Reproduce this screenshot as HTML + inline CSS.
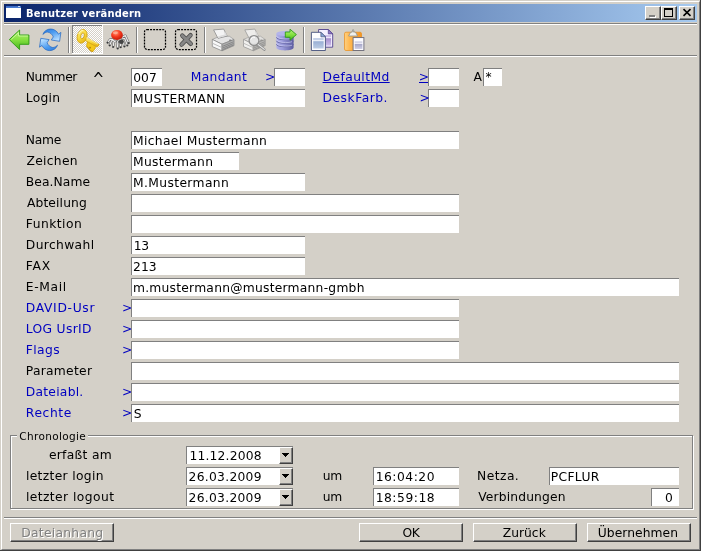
<!DOCTYPE html>
<html><head><meta charset="utf-8"><title>Benutzer verändern</title>
<style>
html,body{margin:0;padding:0;background:#d4d0c8;overflow:hidden}
body{width:701px;height:551px;position:relative;font-family:"DejaVu Sans","Liberation Sans",sans-serif;font-size:12.3px;color:#000}
#win{position:absolute;left:0;top:0;width:701px;height:551px;background:#d4d0c8;box-sizing:border-box;
 border-right:1px solid #404040;border-bottom:1px solid #404040;}
#win:before{content:"";position:absolute;left:1px;top:1px;right:0;bottom:0;border-left:1px solid #fff;border-top:1px solid #fff;border-right:1px solid #808080;border-bottom:1px solid #808080}
#title{position:absolute;left:4px;top:4px;width:693px;height:18px;background:linear-gradient(90deg,#0a246a 0%,#a6caf0 100%)}
#title .t{will-change:transform;position:absolute;left:22px;top:2px;color:#fff;font-weight:bold;font-size:11px;line-height:15px;white-space:nowrap;letter-spacing:.22px;font-family:"DejaVu Sans Condensed","DejaVu Sans","Liberation Sans",sans-serif}
.cb{position:absolute;top:2px;width:16px;height:14px;background:#d4d0c8;box-sizing:border-box;border:1px solid;border-color:#fff #404040 #404040 #fff;box-shadow:inset -1px -1px 0 #808080}
.cb svg{position:absolute;left:-1px;top:-1px}
.hl{position:absolute;height:0;border-top:1px solid #808080;border-bottom:1px solid #fff}
.lb{position:absolute;height:19px;line-height:18px;white-space:nowrap}
.lb.car{font-size:14px;transform:scaleY(1.3);transform-origin:0 3.6px}
.lb.g{font-size:10.5px;line-height:14px;height:14px}
.lb.dis{color:#808080;text-shadow:1px 1px 0 #fff}
.bl{color:#0000c0}
.ul{text-decoration:underline}
.in{position:absolute;box-sizing:border-box;background:#fff;border-top:1px solid #808080;border-left:1px solid #808080;white-space:nowrap;overflow:hidden}
.in span{position:absolute;top:-1px;line-height:18px}
.grp{position:absolute;left:10px;top:435px;width:683px;height:74px;box-sizing:border-box;border:1px solid #808080;box-shadow:1px 1px 0 #fff, inset 1px 1px 0 #fff}
.grpl{position:absolute;left:17px;top:430px;width:71px;height:10px;background:#d4d0c8;}
.grpl span{position:absolute;top:0;font-size:11px;line-height:14px;}
.dd{position:absolute;width:14px;height:17px;box-sizing:border-box;background:#d4d0c8;border:1px solid;border-color:#fff #404040 #404040 #fff;box-shadow:inset -1px -1px 0 #808080}
.dd svg{position:absolute;left:2px;top:5px}
.btn{position:absolute;top:523px;width:104px;height:19px;box-sizing:border-box;background:#d4d0c8;border:1px solid;border-color:#fff #404040 #404040 #fff;box-shadow:inset -1px -1px 0 #808080;}
.btn span{position:absolute;top:-1px;line-height:18px;white-space:nowrap}
.btn.dis{color:#808080;text-shadow:1px 1px 0 #fff}
#tb{position:absolute;left:0;top:0}
#txt{position:absolute;left:0;top:0;width:701px;height:551px;will-change:transform}
</style></head><body>
<div id="win">
<div id="title">
 <svg style="position:absolute;left:2px;top:2px" width="15" height="12" viewBox="0 0 15 12"><rect x="0" y="0" width="15" height="12" fill="#fff"/><rect x="0" y="0" width="15" height="2" fill="#4a7cd0"/><rect x="0" y="0" width="15" height="1" fill="#3c6cc8"/><rect x="12" y="0" width="2" height="1" fill="#c8d8f0"/></svg>
 <div class="t">Benutzer verändern</div>
 <div class="cb" style="left:641px"><svg width="16" height="14"><rect x="5" y="10" width="6" height="2" fill="#fff"/><rect x="4" y="9" width="6" height="2" fill="#808080"/></svg></div>
 <div class="cb" style="left:657px"><svg width="16" height="14"><rect x="3.5" y="3" width="8" height="7.5" fill="none" stroke="#000" stroke-width="1"/><rect x="3" y="2" width="9" height="2" fill="#000"/></svg></div>
 <div class="cb" style="left:675px"><svg width="16" height="14"><path d="M4.5 3.2 L11.5 9.8 M11.5 3.2 L4.5 9.8" stroke="#000" stroke-width="1.6" fill="none"/></svg></div>
</div>
<div class="hl" style="left:4px;top:23px;width:693px"></div>
<div class="hl" style="left:4px;top:55px;width:693px"></div>
<div class="hl" style="left:4px;top:517px;width:693px"></div>
<svg id="tb" width="701" height="58" viewBox="0 0 701 58">
<defs>
 <linearGradient id="gGreen" x1="0" y1="0" x2="0" y2="1"><stop offset="0" stop-color="#b8f47c"/><stop offset=".5" stop-color="#84e040"/><stop offset="1" stop-color="#44b41c"/></linearGradient>
 <linearGradient id="gBlue" x1="0" y1="0" x2="0" y2="1"><stop offset="0" stop-color="#3c8ce0"/><stop offset=".5" stop-color="#9cd0ff"/><stop offset="1" stop-color="#2c78d8"/></linearGradient>
 <linearGradient id="gBlue2" x1="0" y1="0" x2="0" y2="1"><stop offset="0" stop-color="#a8d8ff"/><stop offset=".6" stop-color="#4c98e8"/><stop offset="1" stop-color="#2468c8"/></linearGradient>
 <linearGradient id="gKey" x1="0" y1="0" x2="1" y2="1"><stop offset="0" stop-color="#fff090"/><stop offset=".5" stop-color="#f8d838"/><stop offset="1" stop-color="#e0a810"/></linearGradient>
 <radialGradient id="gRed" cx=".4" cy=".3" r=".7"><stop offset="0" stop-color="#ff9878"/><stop offset=".5" stop-color="#f83c20"/><stop offset="1" stop-color="#c01808"/></radialGradient>
 <linearGradient id="gPr" x1="0" y1="0" x2="0" y2="1"><stop offset="0" stop-color="#fafafa"/><stop offset="1" stop-color="#b8b8b8"/></linearGradient>
 <linearGradient id="gCyl" x1="0" y1="0" x2="1" y2="0"><stop offset="0" stop-color="#b0b0e8"/><stop offset=".35" stop-color="#9c9cdc"/><stop offset="1" stop-color="#5c5ca0"/></linearGradient>
 <linearGradient id="gPgB" x1="0" y1="0" x2="0" y2="1"><stop offset="0" stop-color="#ffffff"/><stop offset="1" stop-color="#a8c0e8"/></linearGradient>
 <linearGradient id="gPgP" x1="0" y1="0" x2="0" y2="1"><stop offset="0" stop-color="#f0e8ff"/><stop offset="1" stop-color="#a890d0"/></linearGradient>
 <linearGradient id="gOr" x1="0" y1="0" x2="0" y2="1"><stop offset="0" stop-color="#ffc060"/><stop offset="1" stop-color="#f08818"/></linearGradient>
 <pattern id="chk" x="0" y="0" width="2" height="2" patternUnits="userSpaceOnUse"><rect width="2" height="2" fill="#d4d0c8"/><rect width="1" height="1" fill="#fff"/><rect x="1" y="1" width="1" height="1" fill="#fff"/></pattern>
 <linearGradient id="gPgP2" x1="0" y1="0" x2="0" y2="1"><stop offset="0" stop-color="#a48ccc"/><stop offset="1" stop-color="#cbbce8"/></linearGradient>
 <linearGradient id="gPgB2" x1="0" y1="0" x2="0" y2="1"><stop offset="0" stop-color="#98aed4"/><stop offset="1" stop-color="#bccce4"/></linearGradient>
 <linearGradient id="gPgG" x1="0" y1="0" x2="0" y2="1"><stop offset="0" stop-color="#a4a4c8"/><stop offset="1" stop-color="#d0d0e4"/></linearGradient>
 <linearGradient id="gOr2" x1="0" y1="0" x2="1" y2="0"><stop offset="0" stop-color="#ffd080"/><stop offset=".3" stop-color="#ffb850"/><stop offset="1" stop-color="#f49420"/></linearGradient>
 <linearGradient id="gBlueT" x1="0" y1="0" x2=".6" y2="1"><stop offset="0" stop-color="#2878dc"/><stop offset=".45" stop-color="#4c9cf0"/><stop offset="1" stop-color="#b4dcff"/></linearGradient>
</defs>
<!-- separators -->
<g shape-rendering="crispEdges">
<rect x="68" y="27" width="1" height="26" fill="#808080"/><rect x="69" y="27" width="1" height="26" fill="#fff"/>
<rect x="136" y="27" width="1" height="26" fill="#808080"/><rect x="137" y="27" width="1" height="26" fill="#fff"/>
<rect x="204" y="27" width="1" height="26" fill="#808080"/><rect x="205" y="27" width="1" height="26" fill="#fff"/>
<rect x="303" y="27" width="1" height="26" fill="#808080"/><rect x="304" y="27" width="1" height="26" fill="#fff"/>
<!-- pressed key button -->
<rect x="72" y="25" width="31" height="29" fill="#fff"/>
<rect x="72" y="25" width="30" height="28" fill="#808080"/>
<rect x="73" y="26" width="29" height="27" fill="url(#chk)"/>
</g>
<!-- back arrow -->
<path d="M9.3 39.6 L19.6 30 L19.6 35 L28.9 35 L28.9 44.3 L19.6 44.3 L19.6 49.6 Z" fill="url(#gGreen)" stroke="#34a018" stroke-width="1" stroke-linejoin="round"/>
<path d="M11.300 39.400 L18.600 32.600 L18.600 36 L27.900 36" fill="none" stroke="#d4fca8" stroke-width=".9" stroke-linejoin="round" opacity=".85"/>
<!-- refresh -->
<path id="rf" d="M42.900 34.400 C44 31 47.500 29 50.700 29 C54 29 57 31 58.400 34.100 L60.900 32.400 L59.600 41.300 L51.300 40 L53.300 36.900 C52.500 34.500 50 32.300 47.700 32.100 C46 32 44.300 33 42.900 34.400 Z" fill="url(#gBlueT)" stroke="#2064c0" stroke-width=".7" stroke-linejoin="round"/>
<use href="#rf" transform="rotate(180 50.200 39.800)"/>
<!-- key -->
<g stroke="#d4a410" stroke-width=".8" stroke-linejoin="round">
<path d="M87.500 41.700 L86.500 46 L90.400 50.800 L93 51.600 L95.200 48.200 L95.400 45.800 Z" fill="#f4c818"/>
<path d="M84.600 36.800 L98.800 44.200 L99.100 44.900 L97.300 46.900 L84.100 39.900 Z" fill="url(#gKey)"/>
<ellipse cx="82.100" cy="36.300" rx="4.800" ry="7" transform="rotate(17 82.100 36.300)" fill="url(#gKey)"/>
</g>
<ellipse cx="82.500" cy="35.800" rx="1.700" ry="3" transform="rotate(17 82.500 35.800)" fill="url(#chk)" stroke="#d0a010" stroke-width=".8"/>
<rect x="89.300" y="46.900" width="1.500" height="1.500" fill="#a87c08"/>
<path d="M78.800 34 C79.500 31.800 81.500 30.300 83.500 30.200" stroke="#fff8b0" stroke-width="1.100" fill="none"/>
<path d="M86 37.800 L98 44.100" stroke="#fff49c" stroke-width=".9" fill="none"/>
<path d="M86.800 46.300 L90.600 50.900 L93 51.600" stroke="#c89408" stroke-width=".9" fill="none"/>
<!-- bug -->
<path d="M113 39.500 L110.200 39.200 L107.600 42.600 M114 40.500 L111.600 40.800 L109.700 45.300 M115.500 41 L113.800 42 L113.200 46.800 M117.500 41.500 L117.200 43 L117.700 48.300 M122 37.200 L125.300 35.600 L128.700 43 M122.500 38.800 L124.800 38.600 L127.300 45.300 M119.500 42 L120.300 43.500 L120.600 47.200 M121.500 41.500 L123.300 42.500 L124.400 46.300" stroke="#6c6c6c" stroke-width="2.300" fill="none" stroke-linecap="round" stroke-linejoin="round"/>
<path d="M113 39.500 L110.200 39.200 L107.600 42.600 M114 40.500 L111.600 40.800 L109.700 45.300 M115.500 41 L113.800 42 L113.200 46.800 M117.500 41.500 L117.200 43 L117.700 48.300 M122 37.200 L125.300 35.600 L128.700 43 M122.500 38.800 L124.800 38.600 L127.300 45.300 M119.500 42 L120.300 43.500 L120.600 47.200 M121.500 41.500 L123.300 42.500 L124.400 46.300" stroke="#f0f0f0" stroke-width="1.100" fill="none" stroke-linecap="round" stroke-linejoin="round"/>
<circle cx="107.600" cy="42.600" r=".9" fill="#383838"/><circle cx="109.700" cy="45.300" r=".9" fill="#383838"/><circle cx="113.200" cy="46.800" r=".9" fill="#383838"/><circle cx="117.700" cy="48.300" r=".9" fill="#383838"/><circle cx="128.700" cy="43.000" r=".9" fill="#383838"/><circle cx="127.300" cy="45.300" r=".9" fill="#383838"/><circle cx="120.600" cy="47.200" r=".9" fill="#383838"/><circle cx="124.400" cy="46.300" r=".9" fill="#383838"/>
<ellipse cx="121.300" cy="41.800" rx="2.500" ry="2.300" fill="#444"/>
<ellipse cx="117" cy="35" rx="5.900" ry="5.100" fill="url(#gRed)"/>
<ellipse cx="115.400" cy="32.800" rx="2.600" ry="1.400" fill="#ffb8a0" opacity=".7"/>
<!-- dashed boxes -->
<rect x="144.500" y="29.500" width="21" height="20" rx="2.500" fill="none" stroke="#000" stroke-width="1.250" stroke-dasharray="2 1.050"/>
<rect x="175.500" y="29.500" width="21" height="20" rx="2.500" fill="none" stroke="#000" stroke-width="1.250" stroke-dasharray="2 1.050"/>
<path d="M182.300 35.600 L190.800 43.800 M190.500 35.200 L181.600 44.600" stroke="#484848" stroke-width="4.400" stroke-linecap="round" fill="none"/>
<path d="M182.300 35.600 L190.800 43.800 M190.500 35.200 L181.600 44.600" stroke="#868686" stroke-width="2.900" stroke-linecap="round" fill="none"/>
<!-- printer -->
<g id="prn">
<path d="M212.300 39.400 L217.600 37.200 L229.300 36.200 L234 39.500 L222 44.200 Z" fill="#e4e4e4" stroke="#9a9a9a" stroke-width=".7" stroke-linejoin="round"/>
<path d="M213.600 29.900 L223.700 29.100 L227.100 36 L218 38.400 Z" fill="#f4f4f4" stroke="#8c8c8c" stroke-width=".8" stroke-linejoin="round"/>
<path d="M218.300 37 L226 35 L224.500 32" fill="none" stroke="#dcdcdc" stroke-width="1.500"/>
<path d="M212.300 39.400 L222 44.200 L222 50.800 L212.300 46.600 Z" fill="#f8f8f8" stroke="#8c8c8c" stroke-width=".8" stroke-linejoin="round"/>
<path d="M222 44.200 L234 39.500 L234 45.600 L222 50.800 Z" fill="#b0b0b0" stroke="#888" stroke-width=".8" stroke-linejoin="round"/>
<path d="M212.300 43.200 L222 47.600" fill="none" stroke="#b4b4b4" stroke-width=".9"/>
<path d="M222.600 46.300 L233.500 41.800 M222.600 48 L233.500 43.500 M222.600 49.600 L233.500 45" stroke="#7c7c7c" stroke-width=".8"/>
<ellipse cx="230.300" cy="40.300" rx="1.500" ry=".8" fill="#808080"/>
</g>
<!-- print preview -->
<g opacity=".8"><use href="#prn" x="31.200" y="0"/></g>
<circle cx="254" cy="40.500" r="4.900" fill="#e6e6e6" fill-opacity=".9" stroke="#8c8c8c" stroke-width="1.300"/>
<path d="M251 39.500 C251.500 37.500 253.500 36.800 255 37.300" stroke="#fff" stroke-width="1" fill="none"/>
<path d="M258 44.500 L264.300 49.600" stroke="#909090" stroke-width="2.600" stroke-linecap="round"/>
<path d="M258.300 44.600 L264.300 49.400" stroke="#e8e8e8" stroke-width="1.100" stroke-linecap="round"/>
<!-- db -->
<path d="M276.400 33.500 L276.400 47.600 C276.400 51.400 293.600 51.400 293.600 47.600 L293.600 33.500 Z" fill="url(#gCyl)"/>
<ellipse cx="285" cy="33.500" rx="8.600" ry="2.600" fill="#b4b4ea"/>
<path d="M276.400 37.300 C276.400 40.500 293.600 40.500 293.600 37.300 M276.400 40.800 C276.400 44 293.600 44 293.600 40.800 M276.400 44.300 C276.400 47.500 293.600 47.500 293.600 44.300" fill="none" stroke="#6464a4" stroke-width=".9"/>
<path d="M276.800 36.300 C277.500 39.300 288 39.800 292 38.200 M276.800 39.800 C277.500 42.800 288 43.300 292 41.700 M276.800 43.300 C277.500 46.300 288 46.800 292 45.200" fill="none" stroke="#d4d4f8" stroke-width=".8" opacity=".8"/>
<path d="M285.300 32 L290 32 L290 29.200 L296.400 34.600 L290 40.200 L290 37.300 L285.300 37.300 Z" fill="url(#gGreen)" stroke="#2c9c18" stroke-width=".9" stroke-linejoin="round"/>
<!-- copy -->
<path d="M318.600 29.500 L328.300 29.500 L332.700 33.900 L332.700 47.200 L318.600 47.200 Z" fill="#f4f0ff" stroke="#50408c" stroke-width=".9" stroke-linejoin="round"/>
<path d="M328.300 29.500 L328.300 33.900 L332.700 33.900 Z" fill="#9078c0" stroke="#50408c" stroke-width=".7" stroke-linejoin="round"/>
<rect x="320.300" y="35" width="10.800" height="2.200" fill="#cdbfe8"/>
<rect x="320.300" y="38.200" width="10.800" height="7.400" fill="url(#gPgP2)"/>
<path d="M311.400 32.300 L320.900 32.300 L325.400 36.800 L325.400 50.500 L311.400 50.500 Z" fill="#fdfdff" stroke="#44507c" stroke-width=".9" stroke-linejoin="round"/>
<path d="M320.900 32.300 L320.900 36.800 L325.400 36.800 Z" fill="#8ca8d8" stroke="#44507c" stroke-width=".7" stroke-linejoin="round"/>
<rect x="313.200" y="38" width="10.500" height="2.300" fill="#c4d0e8"/>
<rect x="313.200" y="41.200" width="10.500" height="7.300" fill="url(#gPgB2)"/>
<!-- paste -->
<rect x="344.500" y="32.200" width="17" height="18.300" rx="1.500" fill="url(#gOr2)" stroke="#e88c18" stroke-width=".7"/>
<path d="M348.600 36 L350.400 32.600 L351.600 32.300 L353.100 29.400 L354.600 32.300 L355.800 32.600 L357.600 36 Z" fill="#f0f0ec" stroke="#909088" stroke-width=".8" stroke-linejoin="round"/>
<circle cx="353.100" cy="31.700" r=".8" fill="#909088"/>
<rect x="353.100" y="37.600" width="10.800" height="12.900" fill="#fcfcff" stroke="#686878" stroke-width=".9"/>
<rect x="354.700" y="41.300" width="7.700" height="1.600" fill="#d0d0e4"/>
<rect x="354.700" y="43.800" width="7.700" height="5.200" fill="url(#gPgG)"/>
</svg>

<div class="grp"></div><div class="grpl"></div>
<div class="in" style="left:131px;top:68px;width:31px;height:18px"></div>
<div class="in" style="left:131px;top:89px;width:174px;height:18px"></div>
<div class="in" style="left:131px;top:131px;width:328px;height:18px"></div>
<div class="in" style="left:131px;top:152px;width:108px;height:18px"></div>
<div class="in" style="left:131px;top:173px;width:174px;height:18px"></div>
<div class="in" style="left:131px;top:194px;width:328px;height:18px"></div>
<div class="in" style="left:131px;top:215px;width:328px;height:18px"></div>
<div class="in" style="left:131px;top:236px;width:174px;height:18px"></div>
<div class="in" style="left:131px;top:257px;width:174px;height:18px"></div>
<div class="in" style="left:131px;top:278px;width:548px;height:18px"></div>
<div class="in" style="left:131px;top:299px;width:328px;height:18px"></div>
<div class="in" style="left:131px;top:320px;width:328px;height:18px"></div>
<div class="in" style="left:131px;top:341px;width:328px;height:18px"></div>
<div class="in" style="left:131px;top:362px;width:548px;height:18px"></div>
<div class="in" style="left:131px;top:383px;width:548px;height:18px"></div>
<div class="in" style="left:131px;top:404px;width:548px;height:18px"></div>
<div class="in" style="left:274px;top:68px;width:31px;height:18px"></div>
<div class="in" style="left:428px;top:68px;width:31px;height:18px"></div>
<div class="in" style="left:483px;top:68px;width:19px;height:18px"></div>
<div class="in" style="left:428px;top:89px;width:31px;height:18px"></div>
<div class="in" style="left:186px;top:446px;width:107px;height:18px"></div>
<div class="dd" style="left:279px;top:447px"><svg width="7" height="4" shape-rendering="crispEdges"><path d="M0 0h7v1h-1v1h-1v1h-1v1h-1v-1h-1v-1h-1v-1h-1z" fill="#000"/></svg></div>
<div class="in" style="left:186px;top:467px;width:107px;height:18px"></div>
<div class="dd" style="left:279px;top:468px"><svg width="7" height="4" shape-rendering="crispEdges"><path d="M0 0h7v1h-1v1h-1v1h-1v1h-1v-1h-1v-1h-1v-1h-1z" fill="#000"/></svg></div>
<div class="in" style="left:186px;top:488px;width:107px;height:18px"></div>
<div class="dd" style="left:279px;top:489px"><svg width="7" height="4" shape-rendering="crispEdges"><path d="M0 0h7v1h-1v1h-1v1h-1v1h-1v-1h-1v-1h-1v-1h-1z" fill="#000"/></svg></div>
<div class="in" style="left:373px;top:467px;width:86px;height:18px"></div>
<div class="in" style="left:373px;top:488px;width:86px;height:18px"></div>
<div class="in" style="left:549px;top:467px;width:130px;height:18px"></div>
<div class="in" style="left:651px;top:488px;width:28px;height:18px"></div>
<div class="btn" style="left:10px"></div>
<div class="btn" style="left:359px"></div>
<div class="btn" style="left:473px"></div>
<div class="btn" style="left:587px"></div>
<div id="txt">
<div class="lb " style="left:25.81px;top:67.7px;letter-spacing:-0.40px;">Nummer</div>
<div class="lb car" style="left:92.56px;top:68.4px;">^</div>
<div class="lb " style="left:133.25px;top:68.7px;letter-spacing:0.02px;">007</div>
<div class="lb bl" style="left:190.81px;top:67.7px;letter-spacing:0.34px;">Mandant</div>
<div class="lb bl" style="left:265.00px;top:67.7px;">&gt;</div>
<div class="lb bl ul" style="left:322.56px;top:67.7px;letter-spacing:0.42px;">DefaultMd</div>
<div class="lb bl ul" style="left:418.75px;top:67.7px;width:9.1px;overflow:hidden;">&gt;</div>
<div class="lb " style="left:473.44px;top:67.7px;">A</div>
<div class="lb " style="left:485.44px;top:67.7px;">*</div>
<div class="lb " style="left:25.81px;top:88.7px;letter-spacing:0.26px;">Login</div>
<div class="lb " style="left:133.06px;top:89.7px;letter-spacing:0.36px;">MUSTERMANN</div>
<div class="lb bl" style="left:322.56px;top:88.7px;letter-spacing:0.52px;">DeskFarb.</div>
<div class="lb bl" style="left:419.50px;top:88.7px;">&gt;</div>
<div class="lb " style="left:25.81px;top:130.7px;letter-spacing:-0.24px;">Name</div>
<div class="lb " style="left:133.06px;top:131.7px;letter-spacing:0.33px;">Michael Mustermann</div>
<div class="lb " style="left:26.50px;top:151.7px;letter-spacing:0.29px;">Zeichen</div>
<div class="lb " style="left:133.06px;top:152.7px;letter-spacing:0.31px;">Mustermann</div>
<div class="lb " style="left:25.81px;top:172.7px;letter-spacing:0.08px;">Bea.Name</div>
<div class="lb " style="left:133.06px;top:173.7px;letter-spacing:0.37px;">M.Mustermann</div>
<div class="lb " style="left:26.94px;top:193.7px;letter-spacing:0.13px;">Abteilung</div>
<div class="lb " style="left:25.81px;top:214.7px;letter-spacing:0.47px;">Funktion</div>
<div class="lb " style="left:25.81px;top:235.7px;letter-spacing:0.36px;">Durchwahl</div>
<div class="lb " style="left:133.69px;top:236.7px;letter-spacing:-0.14px;">13</div>
<div class="lb " style="left:25.81px;top:256.7px;letter-spacing:0.80px;">FAX</div>
<div class="lb " style="left:133.12px;top:257.7px;letter-spacing:0.05px;">213</div>
<div class="lb " style="left:25.81px;top:277.7px;letter-spacing:0.62px;">E-Mail</div>
<div class="lb " style="left:132.94px;top:278.7px;letter-spacing:0.24px;">m.mustermann@mustermann-gmbh</div>
<div class="lb bl" style="left:25.81px;top:298.7px;letter-spacing:0.67px;">DAVID-Usr</div>
<div class="lb bl" style="left:122.00px;top:298.7px;">&gt;</div>
<div class="lb bl" style="left:25.81px;top:319.7px;letter-spacing:0.32px;">LOG UsrID</div>
<div class="lb bl" style="left:122.00px;top:319.7px;">&gt;</div>
<div class="lb bl" style="left:25.81px;top:340.7px;letter-spacing:0.38px;">Flags</div>
<div class="lb bl" style="left:122.00px;top:340.7px;">&gt;</div>
<div class="lb " style="left:25.81px;top:361.7px;letter-spacing:0.27px;">Parameter</div>
<div class="lb bl" style="left:25.81px;top:382.7px;letter-spacing:0.25px;">Dateiabl.</div>
<div class="lb bl" style="left:122.00px;top:382.7px;">&gt;</div>
<div class="lb bl" style="left:25.81px;top:403.7px;letter-spacing:0.61px;">Rechte</div>
<div class="lb bl" style="left:122.00px;top:403.7px;">&gt;</div>
<div class="lb " style="left:133.75px;top:404.7px;">S</div>
<div class="lb " style="left:48.88px;top:445.7px;letter-spacing:0.30px;">erfaßt am</div>
<div class="lb " style="left:189.44px;top:446.7px;letter-spacing:0.19px;">11.12.2008</div>
<div class="lb " style="left:25.88px;top:466.7px;letter-spacing:0.34px;">letzter login</div>
<div class="lb " style="left:188.62px;top:467.7px;letter-spacing:0.28px;">26.03.2009</div>
<div class="lb " style="left:322.75px;top:466.7px;letter-spacing:-0.40px;">um</div>
<div class="lb " style="left:375.69px;top:467.7px;letter-spacing:0.51px;">16:04:20</div>
<div class="lb " style="left:477.06px;top:466.7px;letter-spacing:0.45px;">Netza.</div>
<div class="lb " style="left:550.81px;top:467.7px;letter-spacing:0.32px;">PCFLUR</div>
<div class="lb " style="left:25.88px;top:487.7px;letter-spacing:0.43px;">letzter logout</div>
<div class="lb " style="left:188.62px;top:488.7px;letter-spacing:0.28px;">26.03.2009</div>
<div class="lb " style="left:322.75px;top:487.7px;letter-spacing:-0.40px;">um</div>
<div class="lb " style="left:375.69px;top:488.7px;letter-spacing:0.52px;">18:59:18</div>
<div class="lb " style="left:478.19px;top:487.7px;letter-spacing:0.15px;">Verbindungen</div>
<div class="lb " style="left:665.00px;top:488.7px;">0</div>
<div class="lb dis" style="left:21.31px;top:523.7px;letter-spacing:0.27px;">Dateianhang</div>
<div class="lb " style="left:402.56px;top:523.7px;letter-spacing:-0.40px;">OK</div>
<div class="lb " style="left:502.75px;top:523.7px;letter-spacing:0.01px;">Zurück</div>
<div class="lb " style="left:597.69px;top:523.7px;letter-spacing:0.07px;">Übernehmen</div>
<div class="lb g" style="left:19.34px;top:429.2px;letter-spacing:0.34px;">Chronologie</div>
</div>
</div>
</body></html>
